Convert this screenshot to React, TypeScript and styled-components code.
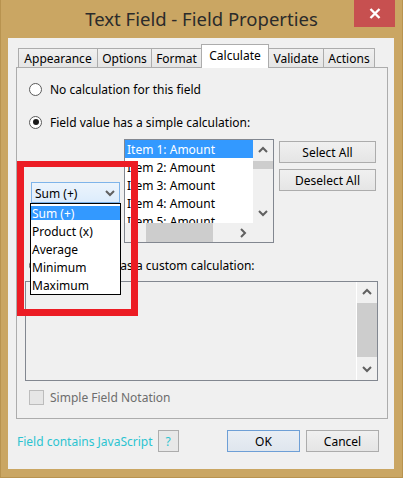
import React from 'react';
import styled, { createGlobalStyle } from 'styled-components';

const UI = `"Noto Sans", "Open Sans", "DejaVu Sans", sans-serif`;

const Global = createGlobalStyle`
  html, body { margin: 0; padding: 0; background: #ffffff; }
  body { font-family: ${UI}; font-size: 12px; color: #000; }
  * { box-sizing: border-box; }
`;

const Window = styled.div`
  position: relative;
  width: 403px;
  height: 478px;
  background: #caa663;
  box-shadow: inset 1px 0 0 #b8934f, inset -1px 0 0 #b8934f, inset 0 -1px 0 #b8934f;
  display: flex;
  flex-direction: column;
  overflow: hidden;
`;

const TitleBar = styled.div`
  height: 38px;
  display: grid;
  grid-template-columns: 1fr auto 1fr;
  flex: none;
`;

const Title = styled.div`
  grid-column: 2;
  font-family: ${UI};
  font-size: 18.5px;
  line-height: 38px;
  color: #2b2b2b;
  white-space: nowrap;
`;

const CloseButton = styled.div`
  grid-column: 3;
  justify-self: end;
  align-self: start;
  margin-right: 8px;
  width: 41px;
  height: 27px;
  background: #c75050;
  display: flex;
  align-items: center;
  justify-content: center;
`;

const Client = styled.div`
  flex: 1;
  margin: 0 9px 9px 8px;
  background: #f0f0f0;
  padding: 7px 6px 0 8px;
  display: flex;
  flex-direction: column;
`;

const TabRow = styled.div`
  display: flex;
  align-items: flex-end;
  height: 23px;
  padding-left: 2px;
  margin-bottom: -1px;
  position: relative;
  z-index: 1;
`;

const Tab = styled.div<{ $w: number; $active?: boolean }>`
  width: ${(p) => p.$w}px;
  height: ${(p) => (p.$active ? 24 : 20)}px;
  margin-left: -1px;
  &:first-child { margin-left: 0; }
  border: 1px solid #acacac;
  border-bottom: ${(p) => (p.$active ? 'none' : '1px solid #acacac')};
  background: ${(p) => (p.$active ? '#ffffff' : 'linear-gradient(#f0f0f0, #e5e5e5)')};
  position: relative;
  z-index: ${(p) => (p.$active ? 2 : 0)};
  display: flex;
  align-items: center;
  justify-content: center;
  font-size: 12px;
  color: #000;
  white-space: nowrap;
  overflow: hidden;
  padding-bottom: ${(p) => (p.$active ? 2 : 0)}px;
`;

const Panel = styled.div`
  height: 352px;
  border: 1px solid #acacac;
  background: #f0f0f0;
  display: flex;
  flex-direction: column;
`;

const RadioRow = styled.div<{ $mt: number }>`
  display: flex;
  align-items: center;
  height: 20px;
  margin-top: ${(p) => p.$mt}px;
  padding-left: 12px;
  gap: 8px;
  white-space: nowrap;
`;

const Radio = styled.div<{ $checked?: boolean }>`
  width: 13px;
  height: 13px;
  border-radius: 50%;
  border: 1px solid #5a5a5a;
  background: #ffffff;
  flex: none;
  display: flex;
  align-items: center;
  justify-content: center;
  &::after {
    content: '';
    display: ${(p) => (p.$checked ? 'block' : 'none')};
    width: 6px;
    height: 6px;
    border-radius: 50%;
    background: #1a1a1a;
  }
`;

const Middle = styled.div`
  display: flex;
  align-items: flex-start;
  margin-top: 7px;
  padding-left: 14px;
  height: 104px;
`;

const ComboWrap = styled.div`
  position: relative;
  margin-top: 43px;
  width: 89px;
  flex: none;
`;

const Combo = styled.div`
  height: 21px;
  border: 1px solid #7eb4ea;
  background: linear-gradient(#ecf4fc, #dcecfc);
  display: flex;
  align-items: center;
  justify-content: space-between;
  padding: 1px 4px 0 3px;
`;

const DropList = styled.div`
  position: absolute;
  top: 21px;
  left: -1px;
  width: 91px;
  height: 92px;
  border: 1px solid #000;
  background: #fff;
  z-index: 5;
`;

const DropItem = styled.div<{ $sel?: boolean }>`
  height: 18px;
  display: flex;
  align-items: center;
  & > span {
    display: block;
    width: 100%;
    height: 14px;
    line-height: 14px;
    padding: 1px 0 0 1px;
    background: ${(p) => (p.$sel ? '#3399ff' : 'transparent')};
    color: ${(p) => (p.$sel ? '#fff' : '#000')};
    white-space: nowrap;
  }
`;

const ListBox = styled.div`
  margin-left: 4px;
  width: 150px;
  height: 104px;
  border: 1px solid #828790;
  background: #fff;
  display: grid;
  grid-template-columns: 1fr 20px;
  grid-template-rows: 1fr 19px;
  flex: none;
`;

const ListItems = styled.div`
  overflow: hidden;
`;

const ListItem = styled.div<{ $sel?: boolean }>`
  height: 18px;
  line-height: 18px;
  padding: 1px 0 0 2px;
  white-space: nowrap;
  background: ${(p) => (p.$sel ? '#3399ff' : 'transparent')};
  color: ${(p) => (p.$sel ? '#fff' : '#000')};
`;

const VScroll = styled.div`
  background: #f0f0f0;
  display: grid;
  grid-template-rows: 20px 1fr 20px;
`;

const HScroll = styled.div`
  background: #f0f0f0;
  display: grid;
  grid-template-columns: 20px 1fr 20px;
`;

const Corner = styled.div`
  background: #f0f0f0;
`;

const ArrowCell = styled.div`
  display: flex;
  align-items: center;
  justify-content: center;
`;

const Track = styled.div<{ $dir: 'v' | 'h'; $start: number; $size: number }>`
  position: relative;
  &::after {
    content: '';
    position: absolute;
    background: #cdcdcd;
    ${(p) =>
      p.$dir === 'v'
        ? `left: 0; right: 0; top: ${p.$start}px; height: ${p.$size}px;`
        : `top: 0; bottom: 0; left: ${p.$start}px; width: ${p.$size}px;`}
  }
`;

const ButtonCol = styled.div`
  margin-left: 5px;
  margin-top: 2px;
  display: flex;
  flex-direction: column;
  gap: 6px;
`;

const Button = styled.div<{ $w: number; $default?: boolean }>`
  width: ${(p) => p.$w}px;
  height: 22px;
  border: 1px solid ${(p) => (p.$default ? '#6e9fd6' : '#acacac')};
  background: ${(p) => (p.$default ? 'linear-gradient(#e9eef4, #dfe6ee)' : 'linear-gradient(#f0f0f0, #e5e5e5)')};
  display: flex;
  align-items: center;
  justify-content: center;
  font-size: 12px;
  color: #000;
  flex: none;
`;

const TextArea = styled.div`
  margin-top: 6px;
  margin-left: 8px;
  width: 353px;
  height: 100px;
  border: 1px solid #828790;
  background: #f0f0f0;
  display: flex;
  justify-content: flex-end;
`;

const AreaScroll = styled.div`
  width: 21px;
  border-left: 1px solid #ffffff;
  display: grid;
  grid-template-rows: 20px 1fr 22px;
`;

const CheckRow = styled.div`
  display: flex;
  align-items: center;
  height: 20px;
  margin-top: 6px;
  padding-left: 12px;
  gap: 6px;
  color: #6d6d6d;
`;

const CheckBox = styled.div`
  width: 15px;
  height: 15px;
  border: 1px solid #bcbcbc;
  background: #e6e6e6;
`;

const Footer = styled.div`
  margin-top: 11px;
  display: flex;
  align-items: center;
  height: 22px;
  padding-left: 1px;
  padding-right: 9px;
`;

const JsLink = styled.div`
  color: #2cc4d0;
  font-size: 12px;
  white-space: nowrap;
`;

const HelpButton = styled.div`
  margin-left: 5px;
  width: 21px;
  height: 22px;
  border: 1px solid #acacac;
  background: #e8e8e8;
  color: #2cc4d0;
  display: flex;
  align-items: center;
  justify-content: center;
  font-size: 12px;
`;

const Spacer = styled.div`
  flex: 1;
`;

const FooterButtons = styled.div`
  display: flex;
  gap: 6px;
`;

const Annotation = styled.div`
  position: absolute;
  left: 17px;
  top: 161px;
  width: 121px;
  height: 155px;
  border: 7px solid #ec1c24;
  border-top-width: 6px;
  z-index: 10;
  pointer-events: none;
`;

const Chevron = ({ dir, color = '#606060' }: { dir: 'up' | 'down' | 'left' | 'right'; color?: string }) => {
  const paths: Record<string, string> = {
    up: 'M1 6 L5 2 L9 6',
    down: 'M1 2 L5 6 L9 2',
    left: 'M6 1 L2 5 L6 9',
    right: 'M2 1 L6 5 L2 9',
  };
  const vertical = dir === 'up' || dir === 'down';
  return (
    <svg width={vertical ? 10 : 8} height={vertical ? 8 : 10} viewBox={vertical ? '0 0 10 8' : '0 0 8 10'}>
      <path d={paths[dir]} fill="none" stroke={color} strokeWidth="2" />
    </svg>
  );
};

const tabs: { label: string; w: number; active?: boolean }[] = [
  { label: 'Appearance', w: 80 },
  { label: 'Options', w: 55 },
  { label: 'Format', w: 51 },
  { label: 'Calculate', w: 68, active: true },
  { label: 'Validate', w: 56 },
  { label: 'Actions', w: 52 },
];

const dropItems = ['Sum (+)', 'Product (x)', 'Average', 'Minimum', 'Maximum'];
const listItems = ['Item 1: Amount', 'Item 2: Amount', 'Item 3: Amount', 'Item 4: Amount', 'Item 5: Amount'];

export default function App() {
  return (
    <>
      <Global />
      <Window>
        <TitleBar>
          <Title>Text Field - Field Properties</Title>
          <CloseButton>
            <svg width="12" height="11" viewBox="0 0 12 11">
              <path d="M1.5 1 L10.5 10 M10.5 1 L1.5 10" stroke="#ffffff" strokeWidth="2.4" />
            </svg>
          </CloseButton>
        </TitleBar>
        <Client>
          <TabRow>
            {tabs.map((t) => (
              <Tab key={t.label} $w={t.w} $active={t.active}>
                {t.label}
              </Tab>
            ))}
          </TabRow>
          <Panel>
            <RadioRow $mt={11}>
              <Radio />
              No calculation for this field
            </RadioRow>
            <RadioRow $mt={13}>
              <Radio $checked />
              Field value has a simple calculation:
            </RadioRow>
            <Middle>
              <ComboWrap>
                <Combo>
                  <span>Sum (+)</span>
                  <Chevron dir="down" />
                </Combo>
                <DropList>
                  {dropItems.map((d, i) => (
                    <DropItem key={d} $sel={i === 0}>
                      <span>{d}</span>
                    </DropItem>
                  ))}
                </DropList>
              </ComboWrap>
              <ListBox>
                <ListItems>
                  {listItems.map((d, i) => (
                    <ListItem key={d} $sel={i === 0}>
                      {d}
                    </ListItem>
                  ))}
                </ListItems>
                <VScroll>
                  <ArrowCell><Chevron dir="up" /></ArrowCell>
                  <Track $dir="v" $start={1} $size={8} />
                  <ArrowCell><Chevron dir="down" /></ArrowCell>
                </VScroll>
                <HScroll>
                  <ArrowCell><Chevron dir="left" /></ArrowCell>
                  <Track $dir="h" $start={1} $size={67} />
                  <ArrowCell><Chevron dir="right" /></ArrowCell>
                </HScroll>
                <Corner />
              </ListBox>
              <ButtonCol>
                <Button $w={97}>Select All</Button>
                <Button $w={97}>Deselect All</Button>
              </ButtonCol>
            </Middle>
            <RadioRow $mt={12}>
              <Radio />
              Field value has a custom calculation:
            </RadioRow>
            <TextArea>
              <AreaScroll>
                <ArrowCell><Chevron dir="up" /></ArrowCell>
                <Track $dir="v" $start={1} $size={54} />
                <ArrowCell><Chevron dir="down" /></ArrowCell>
              </AreaScroll>
            </TextArea>
            <CheckRow>
              <CheckBox />
              Simple Field Notation
            </CheckRow>
          </Panel>
          <Footer>
            <JsLink>Field contains JavaScript</JsLink>
            <HelpButton>?</HelpButton>
            <Spacer />
            <FooterButtons>
              <Button $w={73} $default>OK</Button>
              <Button $w={73}>Cancel</Button>
            </FooterButtons>
          </Footer>
        </Client>
        <Annotation />
      </Window>
    </>
  );
}
